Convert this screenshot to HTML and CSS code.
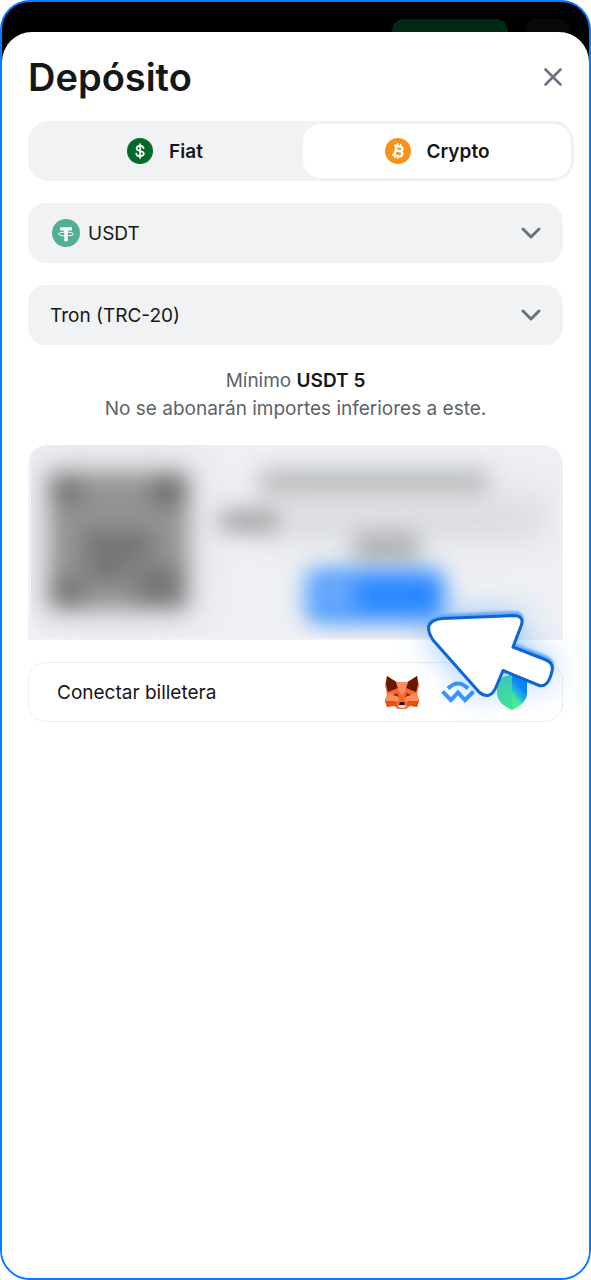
FILE: index.html
```
<!DOCTYPE html>
<html lang="es">
<head>
<meta charset="utf-8">
<meta name="viewport" content="width=device-width, initial-scale=1">
<title>Depósito</title>
<link rel="stylesheet" href="styles.css">
</head>
<body>
<div class="frame">
  <div class="backdrop" aria-hidden="true">
    <span class="backdrop-button"></span>
    <span class="backdrop-menu"></span>
  </div>
  <main class="sheet">
    <header class="header">
      <h1 class="title">Depósito</h1>
      <button class="close" type="button" aria-label="Cerrar">
        <svg width="20" height="20" viewBox="0 0 20 20" fill="none" stroke="currentColor" stroke-width="2.6" stroke-linecap="round"><path d="M2.500 2.500l15 15M17.500 2.500l-15 15"/></svg>
      </button>
    </header>

    <div class="tabs" role="tablist">
      <button class="tab" type="button" role="tab" aria-selected="false">
        <svg width="26" height="26" viewBox="0 0 26 26" fill="none" stroke="#fff" stroke-linecap="round"><circle cx="13" cy="13" r="13" fill="#046a2c" stroke="none"/><path d="M16.600 10.200c-.3-1.500-1.700-2.300-3.500-2.300-2 0-3.500.9-3.500 2.500 0 3.600 7.200 1.600 7.200 5.200 0 1.600-1.500 2.600-3.700 2.600-2.100 0-3.700-.9-3.900-2.600M13.100 6.200v13.700" stroke-width="1.700"/></svg>
        <span>Fiat</span>
      </button>
      <button class="tab tab-active" type="button" role="tab" aria-selected="true">
        <svg width="26" height="26" viewBox="0 0 26 26"><circle cx="13" cy="13" r="13" fill="#f7931a"/><g transform="rotate(13 13 13)" fill="none" stroke="#fff"><path d="M8.200 8.300h5.900c3.800 0 3.800 4.500 0 4.500h-3.600 4.200c4.300 0 4.300 5.100 0 5.100H8.200M10.600 8v10" stroke-width="2.300"/><path d="M11.200 5.400v3M14.300 5.400v3M11.200 17.700v3M14.300 17.700v3" stroke-width="1.600"/></g></svg>
        <span>Crypto</span>
      </button>
    </div>

    <div class="field">
      <svg class="field-icon" width="28" height="28" viewBox="0 0 28 28"><circle cx="14" cy="14" r="14" fill="#53ae94"/><path d="M8 8.300h12v3.300h-4.300v10.600h-3.400V11.600H8z" fill="#fff"/><ellipse cx="14" cy="15" rx="7.500" ry="1.900" fill="none" stroke="#fff" stroke-width="1"/></svg>
      <select class="select" aria-label="Moneda"><option>USDT</option></select>
      <svg class="chevron" width="20" height="12" viewBox="0 0 20 12"><path d="M2 2l8 8 8-8"/></svg>
    </div>

    <div class="field">
      <select class="select" aria-label="Red"><option>Tron (TRC-20)</option></select>
      <svg class="chevron" width="20" height="12" viewBox="0 0 20 12"><path d="M2 2l8 8 8-8"/></svg>
    </div>

    <p class="note">Mínimo <strong>USDT 5</strong><br>No se abonarán importes inferiores a este.</p>

    <div class="address" aria-hidden="true">
      <svg class="address-art" viewBox="0 0 536 195" preserveAspectRatio="none">
        <defs>
          <filter id="soft" x="-40%" y="-100%" width="180%" height="300%" color-interpolation-filters="sRGB"><feGaussianBlur stdDeviation="11"/></filter>
          <filter id="haze" x="-40%" y="-100%" width="180%" height="300%" color-interpolation-filters="sRGB"><feGaussianBlur stdDeviation="20"/></filter>
          <clipPath id="panel"><path d="M3 0H536V193H26A23 23 0 0 1 3 170Z"/></clipPath>
        </defs>
        <g clip-path="url(#panel)">
          <rect x="3" width="533" height="193" fill="#eef0f4"/>
          <rect x="8" y="14" width="162" height="160" fill="#bbb" opacity=".35" filter="url(#haze)"/>
          <rect x="230" y="45" width="290" height="50" fill="#c8c9cb" opacity=".4" filter="url(#haze)"/>
          <g filter="url(#soft)">
            <rect x="22" y="28" width="138" height="136" fill="#929394"/>
            <rect x="22" y="30" width="32" height="30" fill="#777"/>
            <rect x="124" y="30" width="34" height="30" fill="#707070"/>
            <rect x="22" y="130" width="34" height="32" fill="#777"/>
            <path d="M55 85h70v30H55zM62 115h38v22H62zM108 122h46v38h-46z" fill="#747576"/>
            <rect x="233" y="25" width="228" height="24" fill="#b9babb"/>
            <rect x="192" y="65" width="58" height="22" fill="#a0a1a2"/>
            <rect x="250" y="68" width="264" height="16" fill="#d9dbde"/>
            <rect x="326" y="87" width="66" height="32" fill="#b2b3b4"/>
          </g>
          <g filter="url(#soft)">
            <rect x="279" y="125" width="138" height="52" rx="10" fill="#2a88ff"/>
            <rect x="286" y="138" width="42" height="24" fill="#79b4fd"/>
          </g>
        </g>
      </svg>
    </div>

    <button class="wallet" type="button">
      <span>Conectar billetera</span>
      <span class="wallet-icons">
        <svg width="34" height="34" viewBox="0 0 34 34">
          <path d="M2 1l10 6h10l10-6 2 9-2 9 2 7-2 6-7-1-4 3h-8l-4-3-7 1-2-6 2-7-2-9z" fill="#f5672d"/>
          <path d="M2 1l9 6 2 6-10 4-2-8zM32 1l-9 6-2 6 10 4 2-8z" fill="#661800"/>
          <path d="M11 7h12l-3 9-3 5-3-5z" fill="#ff8d5d"/>
          <path d="M0 24l4-6 9 3 1 5-4 1H0zM34 24l-4-6-9 3-1 5 4 1h10z" fill="#ff8d5d"/>
          <path d="M0 26h11l1 4-10 2zM34 26H23l-1 4 10 2z" fill="#e8500f"/>
          <path d="M8 20l4-2 2 4zM26 20l-4-2-2 4z" fill="#8c2c08"/>
          <path d="M14 29h6l1 3-2 1h-4l-2-1z" fill="#d5d7dc"/>
          <path d="M15 27h4l1 3h-6z" fill="#321309"/>
        </svg>
        <svg width="34" height="22" viewBox="0 0 34 22" fill="none" stroke="#3b95fb" stroke-width="4"><path d="M7 7.500Q17-2.500 27 7.500"/><path d="M1.500 10.500l8.500 8.500 7-7.500 7 7.500 8.500-8.500"/></svg>
        <svg width="30" height="36" viewBox="0 0 30 36">
          <defs>
            <linearGradient id="shield-blue" x1=".8" y1="0" x2=".3" y2="1"><stop offset=".35" stop-color="#0783f5"/><stop offset=".6" stop-color="#22b7dc"/><stop offset=".78" stop-color="#48ed91"/></linearGradient>
          </defs>
          <path d="M15 0L0 5v13c0 10 7 14 15 18l1-1V0z" fill="#45e29a"/>
          <path d="M15 0l15 5v13c0 10-7 14-15 18z" fill="url(#shield-blue)"/>
        </svg>
      </span>
    </button>

    <svg class="pointer" width="190" height="150" viewBox="390 580 190 150" aria-hidden="true">
      <defs>
        <filter id="glow" x="-60%" y="-90%" width="220%" height="280%" color-interpolation-filters="sRGB"><feGaussianBlur stdDeviation="17"/></filter>
        <filter id="edge" x="-10%" y="-10%" width="120%" height="120%"><feGaussianBlur stdDeviation="1"/></filter>
        <path id="arrow" d="M442 618.500L513 615.500Q525 615.500 521 626L513 647L545 659.500Q554 663 552 671Q548 689 538 685L503 670.500L496 687Q490 701 479 692L433 640Q421 621 442 618.500Z"/>
      </defs>
      <use href="#arrow" fill="#2286ff" opacity=".5" filter="url(#glow)"/>
      <use href="#arrow" transform="translate(0 -3)" fill="#6aabfb" stroke="#6aabfb" stroke-width="3" filter="url(#edge)"/>
      <use href="#arrow" fill="#fff" stroke="#0d66d0" stroke-width="3" stroke-linejoin="round"/>
    </svg>
  </main>
</div>
</body>
</html>
```
FILE: styles.css
```
* {
  box-sizing: border-box;
}

body {
  margin: 0;
  background: #fff;
  color: #151618;
  font-family: Inter, "Liberation Sans", sans-serif;
  font-size: 19px;
}

button,
select {
  padding: 0;
  border: 0;
  background: none;
  color: inherit;
  font: inherit;
}

svg {
  display: block;
  flex-shrink: 0;
}

.frame {
  display: flex;
  flex-direction: column;
  min-height: 100vh;
  overflow: hidden;
  border: 2px solid #087bff;
  border-radius: 30px;
  background: linear-gradient(#000 80px, #fff 80px);
}

.backdrop {
  display: flex;
  align-items: flex-end;
  justify-content: flex-end;
  gap: 17px;
  height: 30px;
  padding-right: 19px;
}

.backdrop-button {
  width: 116px;
  height: 13px;
  border-radius: 12px 12px 0 0;
  background: #002812;
}

.backdrop-menu {
  width: 45px;
  height: 13px;
  border-radius: 12px 12px 0 0;
  background: #080808;
}

.sheet {
  position: relative;
  display: flex;
  flex: 1;
  flex-direction: column;
  gap: 22px;
  padding: 21px 26px 40px;
  border-radius: 30px 30px 0 0;
  background: #fff;
}

.header {
  display: flex;
  align-items: center;
  justify-content: space-between;
  margin-bottom: -2px;
}

.title {
  margin: 0;
  font-size: 38px;
  font-weight: 600;
  line-height: 48px;
}

.close {
  color: #6c7180;
}

.tabs {
  display: grid;
  grid-template-columns: 1fr 1fr;
  gap: 4px;
  margin-right: -11px;
  padding: 3px;
  border-radius: 21px;
  background: #f1f2f4;
}

.tab {
  display: flex;
  align-items: center;
  justify-content: center;
  gap: 16px;
  height: 54px;
  border-radius: 18px;
  font-weight: 600;
}

.tab-active {
  background: #fff;
}

.field {
  position: relative;
  height: 60px;
  border-radius: 18px;
  background: #f1f2f4;
}

.select {
  width: 100%;
  height: 100%;
  padding: 0 60px 0 22px;
  appearance: none;
}

.field-icon {
  position: absolute;
  top: 16px;
  left: 24px;
  pointer-events: none;
}

.field-icon + .select {
  padding-left: 60px;
}

.chevron {
  position: absolute;
  top: 24px;
  right: 22px;
  fill: none;
  stroke: #6c7180;
  stroke-width: 3;
  stroke-linecap: round;
  stroke-linejoin: round;
  pointer-events: none;
}

.note {
  margin: 0;
  color: #5d626b;
  line-height: 28px;
  text-align: center;
}

.note strong {
  color: #151618;
  font-weight: 600;
}

.address {
  overflow: hidden;
  border-radius: 20px 20px 0 0;
  background: #f0f1f4;
}

.address-art {
  width: 100%;
  height: 195px;
}

.wallet {
  display: flex;
  align-items: center;
  justify-content: space-between;
  height: 60px;
  padding: 0 35px 0 28px;
  border: 1px solid #ededf0;
  border-radius: 18px;
}

.wallet-icons {
  display: flex;
  align-items: center;
  gap: 22px;
}

.pointer {
  position: absolute;
  top: 548px;
  right: 9px;
  overflow: visible;
  pointer-events: none;
}
```
